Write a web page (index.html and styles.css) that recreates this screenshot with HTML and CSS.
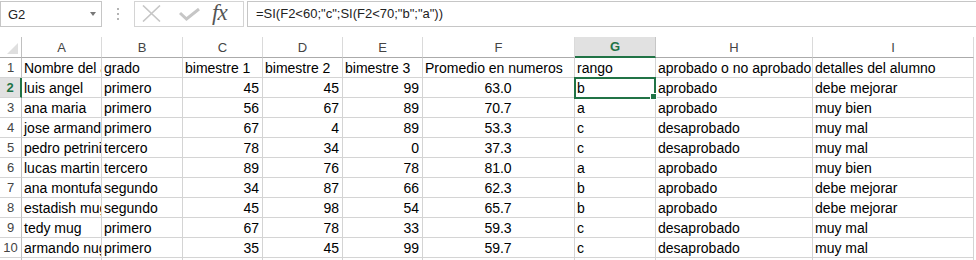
FILE: index.html
```html
<!DOCTYPE html>
<html lang="es">
<head>
    <meta charset="UTF-8">
    <meta name="viewport" content="width=device-width, initial-scale=1.0">
    <title>Notas</title>
    <link rel="stylesheet" href="styles.css">
</head>
<body>
    <div class="formula-bar">
        <div class="name-box">
            <span class="cell-ref">G2</span>
            <span class="drop"></span>
        </div>
        <div class="grip"><i></i><i></i><i></i></div>
        <div class="fx-buttons">
            <svg class="icon-cancel" width="19" height="17" viewBox="0 0 19 17">
                <path d="M1 0.5 L18 16.5 M18 0.5 L1 16.5" stroke="#c6c6c6" stroke-width="1.6" fill="none"/>
            </svg>
            <svg class="icon-enter" width="21" height="13" viewBox="0 0 21 13">
                <path d="M1 5 L7.5 11 L20 1" stroke="#c6c6c6" stroke-width="3" fill="none"/>
            </svg>
            <span class="fx">fx</span>
        </div>
        <div class="formula">=SI(F2&lt;60;"c";SI(F2&lt;70;"b";"a"))</div>
    </div>

    <table class="sheet">
        <colgroup>
            <col class="w-hdr">
            <col class="w-a">
            <col class="w-b">
            <col class="w-c">
            <col class="w-d">
            <col class="w-e">
            <col class="w-f">
            <col class="w-g">
            <col class="w-h">
            <col class="w-i">
        </colgroup>
        <thead>
            <tr>
                <th class="corner"><span class="corner-mark"></span></th>
                <th>A</th>
                <th>B</th>
                <th>C</th>
                <th>D</th>
                <th>E</th>
                <th>F</th>
                <th class="sel-col">G</th>
                <th>H</th>
                <th>I</th>
            </tr>
        </thead>
        <tbody>
            <tr>
                <th>1</th>
                <td>Nombre del alumno</td>
                <td>grado</td>
                <td>bimestre 1</td>
                <td>bimestre 2</td>
                <td>bimestre 3</td>
                <td>Promedio en numeros</td>
                <td>rango</td>
                <td>aprobado o no aprobado</td>
                <td>detalles del alumno</td>
            </tr>
            <tr>
                <th class="sel-row">2</th>
                <td>luis angel</td>
                <td>primero</td>
                <td class="num">45</td>
                <td class="num">45</td>
                <td class="num">99</td>
                <td class="avg">63.0</td>
                <td class="active">b<span class="handle"></span></td>
                <td>aprobado</td>
                <td>debe mejorar</td>
            </tr>
            <tr>
                <th>3</th>
                <td>ana maria</td>
                <td>primero</td>
                <td class="num">56</td>
                <td class="num">67</td>
                <td class="num">89</td>
                <td class="avg">70.7</td>
                <td>a</td>
                <td>aprobado</td>
                <td>muy bien</td>
            </tr>
            <tr>
                <th>4</th>
                <td>jose armando</td>
                <td>primero</td>
                <td class="num">67</td>
                <td class="num">4</td>
                <td class="num">89</td>
                <td class="avg">53.3</td>
                <td>c</td>
                <td>desaprobado</td>
                <td>muy mal</td>
            </tr>
            <tr>
                <th>5</th>
                <td>pedro petrini</td>
                <td>tercero</td>
                <td class="num">78</td>
                <td class="num">34</td>
                <td class="num">0</td>
                <td class="avg">37.3</td>
                <td>c</td>
                <td>desaprobado</td>
                <td>muy mal</td>
            </tr>
            <tr>
                <th>6</th>
                <td>lucas martin</td>
                <td>tercero</td>
                <td class="num">89</td>
                <td class="num">76</td>
                <td class="num">78</td>
                <td class="avg">81.0</td>
                <td>a</td>
                <td>aprobado</td>
                <td>muy bien</td>
            </tr>
            <tr>
                <th>7</th>
                <td>ana montufar</td>
                <td>segundo</td>
                <td class="num">34</td>
                <td class="num">87</td>
                <td class="num">66</td>
                <td class="avg">62.3</td>
                <td>b</td>
                <td>aprobado</td>
                <td>debe mejorar</td>
            </tr>
            <tr>
                <th>8</th>
                <td>estadish mug</td>
                <td>segundo</td>
                <td class="num">45</td>
                <td class="num">98</td>
                <td class="num">54</td>
                <td class="avg">65.7</td>
                <td>b</td>
                <td>aprobado</td>
                <td>debe mejorar</td>
            </tr>
            <tr>
                <th>9</th>
                <td>tedy mug</td>
                <td>primero</td>
                <td class="num">67</td>
                <td class="num">78</td>
                <td class="num">33</td>
                <td class="avg">59.3</td>
                <td>c</td>
                <td>desaprobado</td>
                <td>muy mal</td>
            </tr>
            <tr>
                <th>10</th>
                <td>armando nugget</td>
                <td>primero</td>
                <td class="num">35</td>
                <td class="num">45</td>
                <td class="num">99</td>
                <td class="avg">59.7</td>
                <td>c</td>
                <td>desaprobado</td>
                <td>muy mal</td>
            </tr>
            <tr>
                <th>11</th>
                <td></td><td></td><td></td><td></td><td></td><td></td><td></td><td></td><td></td>
            </tr>
        </tbody>
    </table>
</body>
</html>
```

FILE: styles.css
```css
body {
    margin: 0;
    background: #fff;
    font-family: "Liberation Sans", Arial, sans-serif;
    overflow: hidden;
}

/* formula bar */
.formula-bar {
    display: flex;
    height: 26px;
    margin-top: 1px;
    margin-bottom: 10px;
}
.name-box {
    display: flex;
    align-items: center;
    justify-content: space-between;
    width: 102px;
    box-sizing: border-box;
    border: 1px solid #c6c6c6;
    padding: 0 5px 0 7px;
    font-size: 13px;
    color: #222;
}
.drop {
    width: 0;
    height: 0;
    border-left: 3.5px solid transparent;
    border-right: 3.5px solid transparent;
    border-top: 4px solid #777;
}
.grip {
    display: flex;
    flex-direction: column;
    align-items: center;
    justify-content: center;
    gap: 3px;
    width: 32px;
}
.grip i {
    display: block;
    width: 2px;
    height: 2px;
    background: #b4b4b4;
}
.fx-buttons {
    display: flex;
    align-items: center;
    width: 110px;
    box-sizing: border-box;
    border: 1px solid #d4d4d4;
    padding-left: 7px;
}
.icon-cancel {
    margin-top: -1px;
}
.icon-enter {
    margin-left: 18px;
    margin-top: 1px;
}
.fx {
    margin-left: 12px;
    font-family: "Liberation Serif", "Times New Roman", serif;
    font-style: italic;
    font-size: 23px;
    color: #555;
    letter-spacing: -1px;
    line-height: 1;
    margin-top: -3px;
}
.formula {
    flex: 1;
    margin-left: 3px;
    margin-right: -2px;
    border: 1px solid #c6c6c6;
    padding-left: 8px;
    font-size: 13px;
    line-height: 23px;
    color: #222;
    white-space: nowrap;
}

/* sheet grid */
.sheet {
    border-collapse: separate;
    border-spacing: 0;
    table-layout: fixed;
    width: 974px;
    font-size: 14px;
    color: #000;
}
.w-hdr { width: 22px; }
.w-a { width: 80px; }
.w-b { width: 81px; }
.w-c { width: 80px; }
.w-d { width: 80px; }
.w-e { width: 80px; }
.w-f { width: 152px; }
.w-g { width: 81px; }
.w-h { width: 157px; }
.w-i { width: 161px; }

.sheet td,
.sheet th {
    height: 20px;
    box-sizing: border-box;
    padding: 0;
    white-space: nowrap;
    overflow: hidden;
}
.sheet td {
    border-right: 1px solid #d4d4d4;
    border-bottom: 1px solid #d4d4d4;
    padding: 1px 3px 0 2px;
    line-height: 18px;
    text-align: left;
}
.sheet thead th {
    border-right: 1px solid #dadada;
    border-bottom: 1px solid #ababab;
    font-weight: normal;
    font-size: 13px;
    color: #444;
    line-height: 19px;
    text-align: center;
}
.sheet tbody th {
    border-right: 1px solid #c0c0c0;
    border-bottom: 1px solid #d4d4d4;
    font-weight: normal;
    font-size: 13px;
    color: #444;
    padding-top: 1px;
    line-height: 18px;
    text-align: center;
}
.sheet thead th.corner {
    position: relative;
    border-right-color: #c0c0c0;
}
.corner-mark {
    position: absolute;
    right: 3px;
    bottom: 3px;
    width: 0;
    height: 0;
    border-left: 11px solid transparent;
    border-bottom: 11px solid #dfdfdf;
}
.sheet thead th.sel-col {
    background: #e1e1e1;
    color: #217346;
    font-weight: bold;
    border-bottom: 2px solid #217346;
    border-right-color: #c6c6c6;
}
.sheet tbody th.sel-row {
    background: #e1e1e1;
    color: #217346;
    font-weight: bold;
    border-right: 2px solid #217346;
}
.num {
    text-align: right !important;
}
.avg {
    text-align: center !important;
}
.sheet td.active {
    position: relative;
    overflow: visible;
}
.sheet td.active::after {
    content: "";
    position: absolute;
    top: -1px;
    left: -1px;
    right: -1px;
    bottom: -2px;
    border: 2px solid #217346;
    pointer-events: none;
}
.handle {
    position: absolute;
    right: -2px;
    bottom: -3px;
    width: 5px;
    height: 5px;
    background: #217346;
    border: 1px solid #fff;
    z-index: 2;
}
```
